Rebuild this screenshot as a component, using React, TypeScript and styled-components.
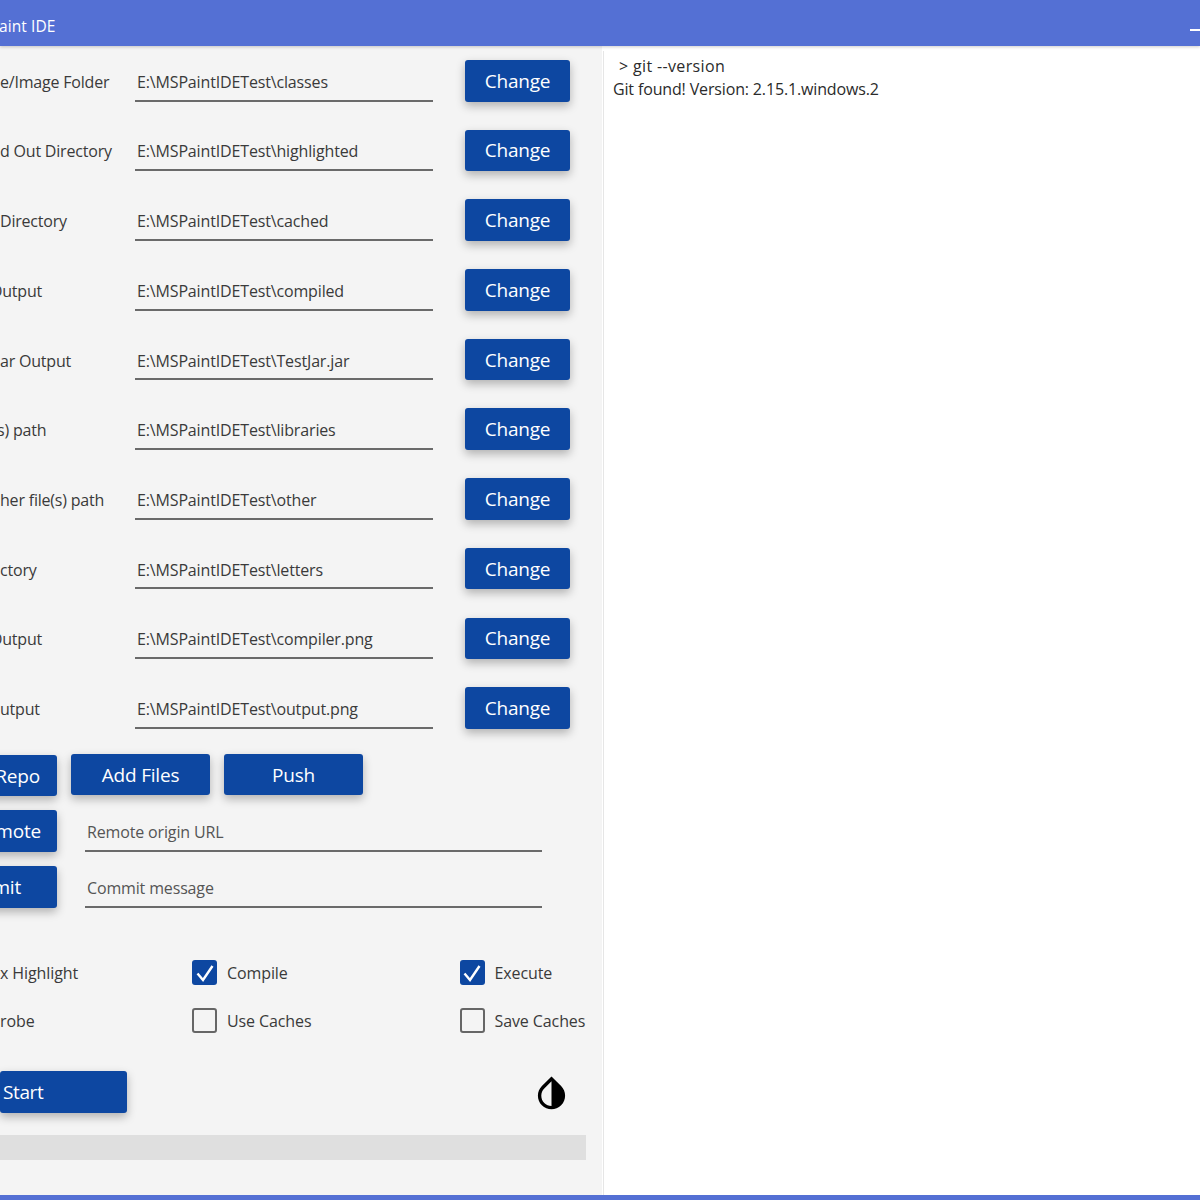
import React from "react";
import styled, { createGlobalStyle } from "styled-components";

const GlobalStyle = createGlobalStyle`
  html, body {
    margin: 0;
    padding: 0;
    background: #fff;
    overflow: hidden;
  }
  body {
    font-family: "Open Sans", "Noto Sans", sans-serif;
    color: #333;
  }
`;

const Window = styled.div`
  width: 1200px;
  height: 1200px;
  display: flex;
  flex-direction: column;
  overflow: hidden;
`;

const TitleBar = styled.header`
  height: 46px;
  flex: none;
  background: #5470d4;
  display: flex;
  align-items: center;
  justify-content: space-between;
  color: #fff;
  font-size: 15.5px;
  letter-spacing: 0.1px;
  box-shadow: 0 1px 3px rgba(0, 0, 0, 0.2);
  position: relative;
`;

const Title = styled.span`
  margin-left: -1px;
  padding-top: 5px;
`;

const Minimize = styled.span`
  width: 10px;
  height: 2px;
  margin-top: 14px;
  background: #fff;
`;

const Main = styled.main`
  flex: 1;
  min-height: 0;
  display: flex;
`;

const LeftPanel = styled.section`
  width: 602px;
  flex: none;
  background: #f4f4f4;
  padding-top: 14px;
  box-sizing: border-box;
  display: flex;
  flex-direction: column;
  overflow: hidden;
`;

const OutputPanel = styled.section`
  flex: 1;
  background: #fff;
  margin: 5px 0 0 1px;
  border-left: 1px solid #e6e6e6;
  padding: 4px 0 0 9px;
  font-size: 16px;
  line-height: 23px;
  letter-spacing: -0.15px;
  color: #2b2b2b;
`;

const OutputLine = styled.div<{ $command?: boolean }>`
  white-space: pre;
  padding-left: ${(p) => (p.$command ? "6px" : "0")};
  letter-spacing: ${(p) => (p.$command ? "0.35px" : "inherit")};
`;

const PathList = styled.div`
  display: flex;
  flex-direction: column;
  gap: 28.1px;
`;

const PathRow = styled.div`
  height: 41.6px;
  display: flex;
  align-items: stretch;
`;

const PathLabel = styled.div`
  width: 135px;
  flex: none;
  display: flex;
  align-items: center;
  font-size: 16px;
  letter-spacing: -0.2px;
  white-space: nowrap;
  overflow: hidden;
  color: #3a3a3a;
  padding-top: 2px;
  box-sizing: border-box;
`;

const LabelText = styled.span<{ $shift?: number }>`
  margin-left: ${(p) => p.$shift || 0}px;
`;

const Field = styled.div<{ $width: number }>`
  width: ${(p) => p.$width}px;
  flex: none;
  box-sizing: border-box;
  border-bottom: 2px solid #6a6a6a;
  display: flex;
  align-items: center;
  padding: 4px 0 0 2px;
  font-size: 16px;
  letter-spacing: -0.15px;
  color: #3a3a3a;
  white-space: nowrap;
`;

const Button = styled.button<{ $width: number }>`
  width: ${(p) => p.$width}px;
  height: 41.6px;
  flex: none;
  border: none;
  border-radius: 3px;
  background: #0d47a1;
  color: #fff;
  font-family: inherit;
  font-size: 19px;
  letter-spacing: -0.2px;
  padding: 0;
  box-shadow: 0 4px 10px rgba(0, 0, 0, 0.28);
`;

const ChangeButton = styled(Button)`
  margin-left: 32px;
`;

const ClippedButton = styled(Button)<{ $inset: number }>`
  margin-left: -60px;
  text-align: right;
  padding-right: ${(p) => p.$inset}px;
`;

const GitBar = styled.div`
  margin-top: 25px;
  display: flex;
  align-items: flex-start;
  gap: 14px;
`;

const RepoButton = styled(ClippedButton)`
  margin-top: 1px;
`;

const GitRow = styled.div`
  margin-top: 14px;
  height: 41.6px;
  display: flex;
`;

const GitField = styled(Field)`
  margin-left: 28px;
  color: #555;
`;

const Options = styled.div`
  margin-top: 52px;
  display: grid;
  grid-template-columns: 192px 267.5px 1fr;
  row-gap: 22px;
`;

const Option = styled.label`
  display: flex;
  align-items: center;
  gap: 10px;
  height: 26px;
  font-size: 16px;
  letter-spacing: -0.1px;
  color: #3a3a3a;
  white-space: nowrap;
`;

const Check = styled.span<{ $checked?: boolean }>`
  width: 25px;
  height: 25px;
  box-sizing: border-box;
  border-radius: 3px;
  flex: none;
  display: flex;
  align-items: center;
  justify-content: center;
  background: ${(p) => (p.$checked ? "#0d47a1" : "transparent")};
  border: ${(p) => (p.$checked ? "none" : "2px solid #666")};
`;

const ActionRow = styled.div`
  margin-top: 37px;
  display: flex;
  align-items: flex-start;
  justify-content: space-between;
  padding-right: 36px;
`;

const StartButton = styled.button`
  width: 127px;
  height: 42px;
  border: none;
  border-radius: 3px;
  background: #0d47a1;
  color: #fff;
  font-family: inherit;
  font-size: 19px;
  letter-spacing: -0.4px;
  text-align: left;
  padding: 0 0 0 3px;
  box-shadow: 0 4px 10px rgba(0, 0, 0, 0.28);
`;

const ThemeIcon = styled.svg`
  width: 29px;
  height: 34px;
  margin-top: 5px;
  display: block;
`;

const Progress = styled.div`
  width: 586px;
  height: 25px;
  margin-top: 22px;
  background: #dfdfdf;
`;

const BottomBar = styled.footer`
  height: 5px;
  flex: none;
  background: #5470d4;
`;

const paths: [string, string, number?][] = [
  ["e/Image Folder", "E:\\MSPaintIDETest\\classes"],
  ["d Out Directory", "E:\\MSPaintIDETest\\highlighted"],
  ["Directory", "E:\\MSPaintIDETest\\cached"],
  ["Output", "E:\\MSPaintIDETest\\compiled", -10],
  ["ar Output", "E:\\MSPaintIDETest\\TestJar.jar"],
  ["s) path", "E:\\MSPaintIDETest\\libraries", -3],
  ["her file(s) path", "E:\\MSPaintIDETest\\other"],
  ["ctory", "E:\\MSPaintIDETest\\letters"],
  ["Output", "E:\\MSPaintIDETest\\compiler.png", -10],
  ["utput", "E:\\MSPaintIDETest\\output.png"],
];

const Tick = () => (
  <svg width="22" height="22" viewBox="0 0 22 22" fill="none">
    <path d="M3.5 11.5 L9 18 L18.5 4" stroke="#fff" strokeWidth="2.4" />
  </svg>
);

const App = () => (
  <Window>
    <GlobalStyle />
    <TitleBar>
      <Title>aint IDE</Title>
      <Minimize />
    </TitleBar>
    <Main>
      <LeftPanel>
        <PathList>
          {paths.map(([label, value, shift]) => (
            <PathRow key={value}>
              <PathLabel>
                <LabelText $shift={shift}>{label}</LabelText>
              </PathLabel>
              <Field $width={298}>{value}</Field>
              <ChangeButton $width={105}>Change</ChangeButton>
            </PathRow>
          ))}
        </PathList>
        <GitBar>
          <RepoButton $width={117} $inset={17}>
            Repo
          </RepoButton>
          <Button $width={139}>Add Files</Button>
          <Button $width={139}>Push</Button>
        </GitBar>
        <GitRow>
          <ClippedButton $width={117} $inset={16}>
            mote
          </ClippedButton>
          <GitField $width={457}>Remote origin URL</GitField>
        </GitRow>
        <GitRow>
          <ClippedButton $width={117} $inset={36}>
            mit
          </ClippedButton>
          <GitField $width={457}>Commit message</GitField>
        </GitRow>
        <Options>
          <Option>x Highlight</Option>
          <Option>
            <Check $checked>
              <Tick />
            </Check>
            Compile
          </Option>
          <Option>
            <Check $checked>
              <Tick />
            </Check>
            Execute
          </Option>
          <Option>robe</Option>
          <Option>
            <Check />
            Use Caches
          </Option>
          <Option>
            <Check />
            Save Caches
          </Option>
        </Options>
        <ActionRow>
          <StartButton>Start</StartButton>
          <ThemeIcon viewBox="4 2 16 20">
            <path d="M17.66 7.93L12 2.27 6.34 7.93c-3.12 3.12-3.12 8.19 0 11.31C7.9 20.8 9.95 21.58 12 21.58c2.05 0 4.1-.78 5.66-2.34 3.12-3.12 3.12-8.19 0-11.31zM12 19.59c-1.6 0-3.11-.62-4.24-1.76C6.62 16.69 6 15.19 6 13.59s.62-3.11 1.76-4.24L12 5.1v14.49z" />
          </ThemeIcon>
        </ActionRow>
        <Progress />
      </LeftPanel>
      <OutputPanel>
        <OutputLine $command>{"> git --version"}</OutputLine>
        <OutputLine>Git found! Version: 2.15.1.windows.2</OutputLine>
      </OutputPanel>
    </Main>
    <BottomBar />
  </Window>
);

export default App;
